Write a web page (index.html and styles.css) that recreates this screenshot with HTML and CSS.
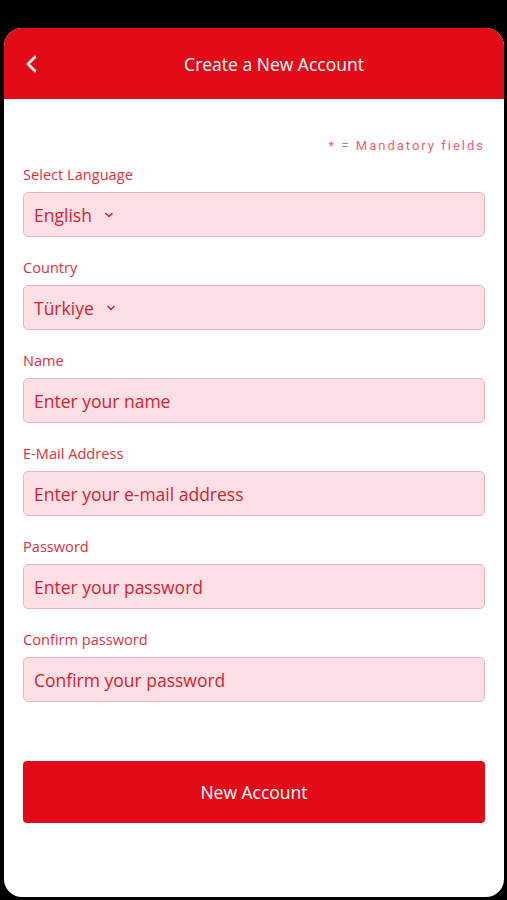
FILE: index.html
```html
<!DOCTYPE html>
<html lang="en">
<head>
    <meta charset="UTF-8">
    <meta name="viewport" content="width=device-width, initial-scale=1.0">
    <title>Create a New Account</title>
    <link rel="stylesheet" href="styles.css">
</head>
<body>
    <div class="screen">
        <header class="topbar">
            <a href="#" class="back">
                <svg width="14" height="20" viewBox="0 0 14 20"><polyline points="10,3 3,10 10,17" fill="none" stroke="#ffffff" stroke-width="2.6" stroke-linecap="round" stroke-linejoin="round"/></svg>
            </a>
            <h1>Create a New Account</h1>
        </header>

        <form class="form">
            <p class="mandatory">* = Mandatory fields</p>

            <div class="field">
                <label>Select Language</label>
                <div class="input select">English <span class="caret"><svg width="10" height="8" viewBox="0 0 10 8"><polyline points="2,2.5 5,5.5 8,2.5" fill="none" stroke="#d8202e" stroke-width="1.6" stroke-linecap="round" stroke-linejoin="round"/></svg></span></div>
            </div>

            <div class="field">
                <label>Country</label>
                <div class="input select">Türkiye <span class="caret"><svg width="10" height="8" viewBox="0 0 10 8"><polyline points="2,2.5 5,5.5 8,2.5" fill="none" stroke="#d8202e" stroke-width="1.6" stroke-linecap="round" stroke-linejoin="round"/></svg></span></div>
            </div>

            <div class="field">
                <label>Name</label>
                <input type="text" class="input" placeholder="Enter your name">
            </div>

            <div class="field">
                <label>E-Mail Address</label>
                <input type="text" class="input" placeholder="Enter your e-mail address">
            </div>

            <div class="field">
                <label>Password</label>
                <input type="password" class="input" placeholder="Enter your password">
            </div>

            <div class="field">
                <label>Confirm password</label>
                <input type="password" class="input" placeholder="Confirm your password">
            </div>

            <button type="button" class="btn">New Account</button>
        </form>
    </div>
</body>
</html>
```

FILE: styles.css
```css
body {
    margin: 0;
    background: #000000;
    font-family: 'Open Sans', sans-serif;
}

.screen {
    margin: 28px 3px 0 4px;
    height: 869px;
    background: #ffffff;
    border-radius: 18px;
    overflow: hidden;
}

.topbar {
    background: #e20c18;
    height: 71px;
    display: flex;
    align-items: center;
    justify-content: center;
    padding-left: 40px;
    position: relative;
}

.topbar h1 {
    margin: 0;
    color: #ffffff;
    font-size: 17.5px;
    font-weight: 400;
}

.topbar .back {
    position: absolute;
    left: 21px;
    top: 26px;
    display: flex;
}

.form {
    padding: 38px 19px 0 19px;
}

.mandatory {
    margin: 0 0 9px;
    text-align: right;
    font-family: Roboto, sans-serif;
    font-size: 13px;
    line-height: 18px;
    letter-spacing: 2px;
    color: #ee5f6e;
}

.field {
    margin-bottom: 20px;
}

.field label {
    display: block;
    font-size: 14.6px;
    line-height: 20px;
    margin-bottom: 8px;
    color: #e0303c;
}

.input {
    box-sizing: border-box;
    width: 100%;
    height: 45px;
    display: flex;
    align-items: center;
    padding: 0 10px;
    background: #fde0e5;
    border: 1px solid #efb3bd;
    border-radius: 5px;
    font-family: 'Open Sans', sans-serif;
    font-size: 17.5px;
    color: #d8202e;
    outline: none;
}

.input::placeholder {
    color: #d8202e;
    opacity: 1;
}

.select .caret {
    display: flex;
    margin-left: 12px;
}

.btn {
    display: block;
    width: 100%;
    height: 62px;
    margin-top: 59px;
    border: none;
    border-radius: 4px;
    background: #e20c18;
    color: #ffffff;
    font-family: 'Open Sans', sans-serif;
    font-size: 17.5px;
}
```
